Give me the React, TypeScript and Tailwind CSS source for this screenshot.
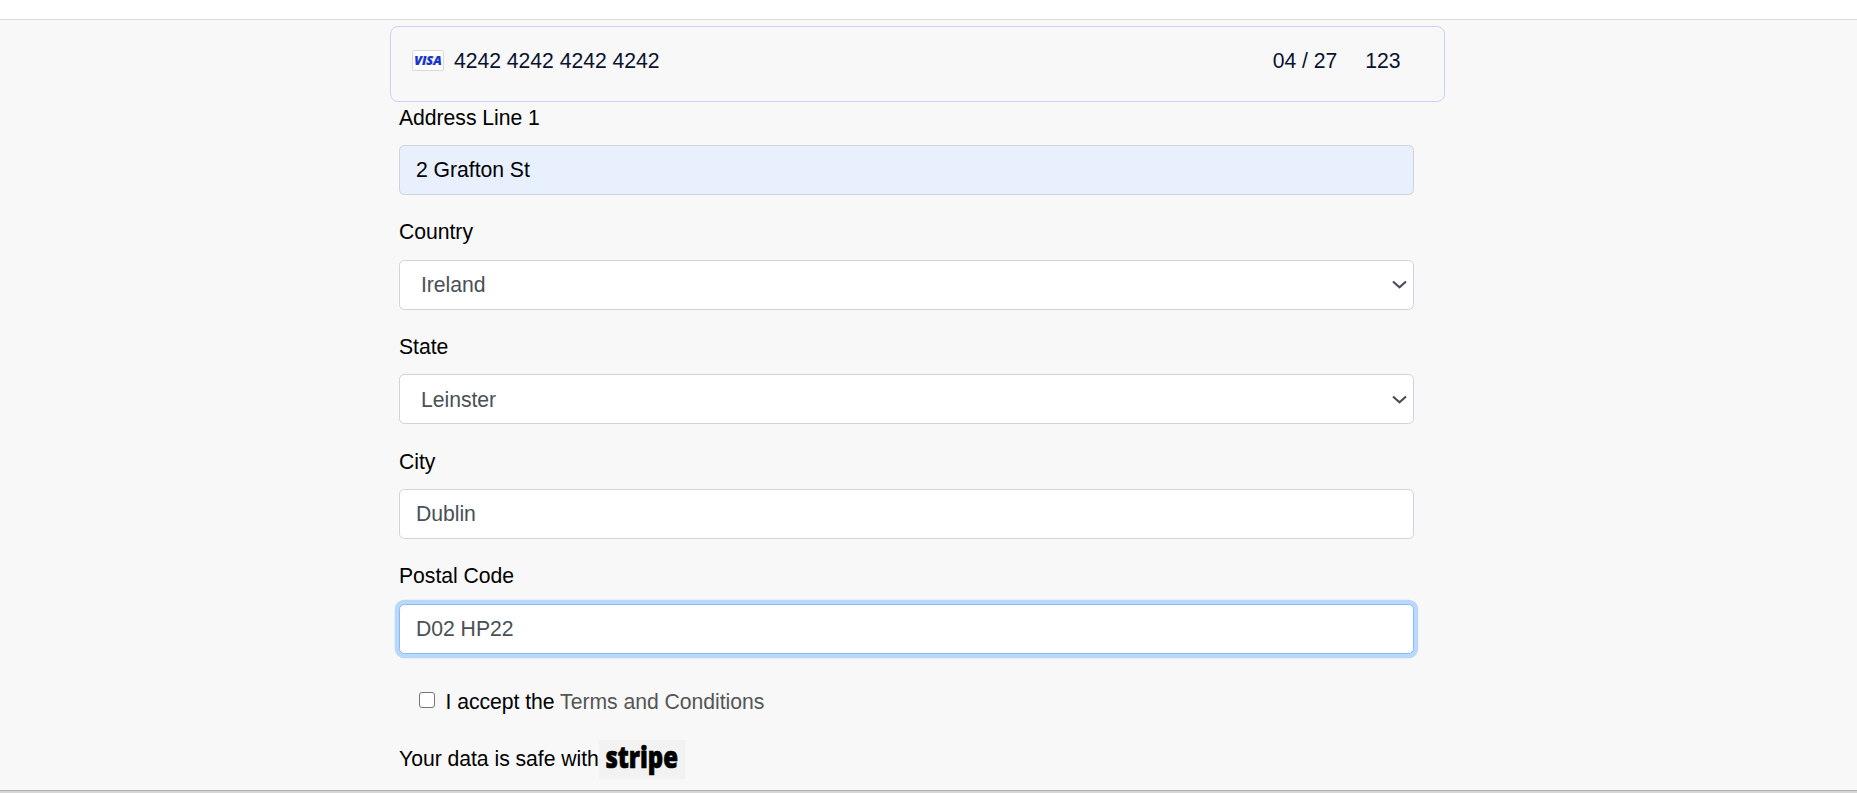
import type { ReactNode } from "react";

function Field({ label, children }: { label: string; children: ReactNode }) {
  return (
    <div className="mb-[21.27px]">
      <div className="mb-[11.4px] h-8 leading-8">{label}</div>
      {children}
    </div>
  );
}

const boxes = {
  plain: "border-[#ced4da] bg-white text-[#495057]",
  filled: "border-[#ced4da] bg-[#e8f0fe] text-black",
  focus: "border-[#80bdff] bg-white text-[#495057] shadow-[0_0_0_4.27px_#bbd8fb]",
};

function TextBox({ value, kind = "plain" }: { value: string; kind?: keyof typeof boxes }) {
  return (
    <div className={`flex h-[50px] items-center rounded-[5.33px] border px-4 pt-[0.67px] ${boxes[kind]}`}>
      {value}
    </div>
  );
}

function SelectBox({ value }: { value: string }) {
  return (
    <div className="flex h-[50px] items-center justify-between rounded-[5.33px] border border-[#ced4da] bg-white pt-[0.67px] pr-[6px] pl-[21px] text-[#495057]">
      <span>{value}</span>
      <svg width="15" height="9" viewBox="0 0 15 9" fill="none" stroke="#495057" strokeWidth="2.2">
        <path d="M1 1.5 7.5 7.3 14 1.5" />
      </svg>
    </div>
  );
}

export default function App() {
  return (
    <div className="flex h-[793px] flex-col overflow-hidden bg-[#f8f8f8] font-['Liberation_Sans',Arial,sans-serif] text-[21.2px] leading-8 tracking-[-0.035px] text-black">
      <header className="h-5 shrink-0 border-b border-[#d9d9d9] bg-white" />
      <main className="grow pt-[6px] pl-[390px]">
        <div className="flex h-[76px] w-[1055px] items-start rounded-[8px] border border-[#c6d3f7] pt-[18px] pr-[43.5px] pl-[21px] text-[#0a1230]">
          <svg className="mt-[5px] mr-[10px]" width="32" height="21" viewBox="0 0 32 21">
            <rect x="0.5" y="0.5" width="31" height="20" rx="1.5" fill="#fff" stroke="#d9d9d9" />
            <text x="2.2" y="15" fontFamily="Open Sans, sans-serif" fontSize="12" fontWeight="800" fontStyle="italic" fill="#1a34cb" stroke="#1a34cb" strokeWidth="0.2" textLength="27.5" lengthAdjust="spacingAndGlyphs">VISA</text>
          </svg>
          <span className="grow">4242 4242 4242 4242</span>
          <span className="mr-[28px]">04 / 27</span>
          <span>123</span>
        </div>
        <form className="mt-[-0.4px] ml-[9px] w-[1015px]">
          <Field label="Address Line 1"><TextBox value="2 Grafton St" kind="filled" /></Field>
          <Field label="Country"><SelectBox value="Ireland" /></Field>
          <Field label="State"><SelectBox value="Leinster" /></Field>
          <Field label="City"><TextBox value="Dublin" /></Field>
          <Field label="Postal Code"><TextBox value="D02 HP22" kind="focus" /></Field>
          <div className="mt-[31.33px] flex h-8 items-start pl-[20px]">
            <span className="mt-[7px] mr-[10.5px] size-4 rounded-[3px] border border-[#767676] bg-white" />
            <span className="pt-px whitespace-pre">I accept the <span className="text-[#555]">Terms and Conditions</span></span>
          </div>
          <div className="mt-[23px] flex h-[39px] items-start">
            <span className="w-[200px] pt-[3px] whitespace-nowrap">Your data is safe with</span>
            <svg className="overflow-visible" width="86" height="39" viewBox="0 0 86 39">
              <rect width="86" height="39" fill="#f2f2f2" />
              <text x="6.5" y="28" fontFamily="Open Sans, sans-serif" fontSize="30" fontWeight="800" fill="#000" stroke="#000" strokeWidth="0.7" textLength="72.5" lengthAdjust="spacingAndGlyphs">stripe</text>
            </svg>
          </div>
        </form>
      </main>
      <footer className="h-[3px] shrink-0 border-t border-[#b0b0b0] bg-[#d9d6d9]" />
    </div>
  );
}
